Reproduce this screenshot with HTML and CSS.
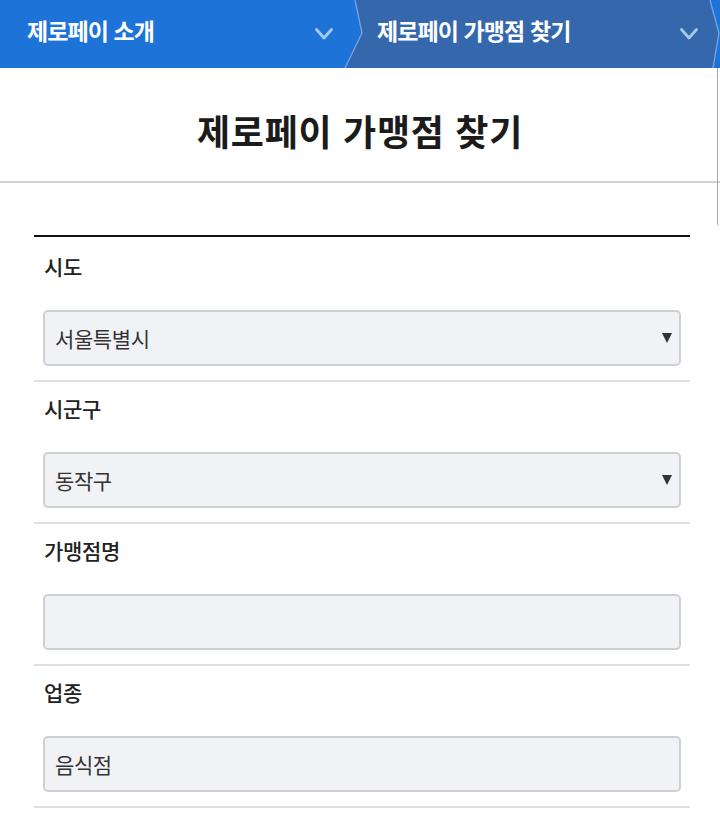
FILE: index.html
```html
<!DOCTYPE html>
<html lang="ko">
<head>
<meta charset="utf-8">
<title>제로페이 가맹점 찾기</title>
<link rel="stylesheet" href="styles.css">
</head>
<body>
<header class="topnav">
  <div class="tab tab-main">
    <span class="tab-label">제로페이 소개</span>
    <svg class="chev" viewBox="0 0 18 12" width="18" height="12"><polyline points="1.5,1.5 9,10 16.5,1.5" fill="none" stroke="currentColor" stroke-width="2.8" stroke-linecap="round" stroke-linejoin="round"/></svg>
  </div>
  <div class="tab tab-sub">
    <span class="tab-label">제로페이 가맹점 찾기</span>
    <svg class="chev" viewBox="0 0 18 12" width="18" height="12"><polyline points="1.5,1.5 9,10 16.5,1.5" fill="none" stroke="currentColor" stroke-width="2.8" stroke-linecap="round" stroke-linejoin="round"/></svg>
  </div>
  <svg class="tab-edges" viewBox="0 0 720 68" width="720" height="68">
    <polygon points="340,0 355,0 362,33 345,68 340,68" fill="#1e73d8"/>
    <polyline points="355,0 362,33 345,68" fill="none" stroke="#74a6e6" stroke-width="1.3"/>
    <polygon points="710,0 720,0 720,68 713,68 719,33" fill="#1e73d8"/>
    <polyline points="710,0 719,33 713,68" fill="none" stroke="#74a6e6" stroke-width="1.3"/>
  </svg>
</header>
<div class="scroll-edge"></div>

<section class="page-title">
  <h1>제로페이 가맹점 찾기</h1>
</section>

<form class="search-form">
  <div class="field field-first">
    <label class="field-label" for="sido">시도</label>
    <div class="select-wrap">
      <select id="sido" class="control"><option>서울특별시</option></select>
    </div>
  </div>
  <div class="field">
    <label class="field-label" for="sigungu">시군구</label>
    <div class="select-wrap">
      <select id="sigungu" class="control"><option>동작구</option></select>
    </div>
  </div>
  <div class="field">
    <label class="field-label" for="name">가맹점명</label>
    <input id="name" class="control" type="text" value="">
  </div>
  <div class="field">
    <label class="field-label" for="type">업종</label>
    <input id="type" class="control" type="text" value="음식점">
  </div>
</form>
</body>
</html>
```

FILE: styles.css
```css
* { box-sizing: border-box; }

html, body {
  margin: 0;
  padding: 0;
  background: #ffffff;
  overflow: hidden;
}

body {
  font-family: "Noto Sans CJK KR", "Noto Sans", sans-serif;
  color: #222;
  position: relative;
}

.topnav {
  position: relative;
  display: flex;
  height: 68px;
  background: #3567ad;
}

.tab {
  display: flex;
  align-items: center;
  height: 68px;
  color: #ffffff;
}

.tab-main {
  flex: 0 0 345px;
  background: #1e73d8;
  padding-left: 27px;
}

.tab-sub {
  flex: 1 1 auto;
  padding-left: 32px;
}

.tab-label {
  font-size: 23px;
  font-weight: 700;
  letter-spacing: -0.9px;
  line-height: 30px;
  margin-top: -8px;
}

.tab-main .chev {
  margin-left: auto;
  margin-right: 12px;
}

.tab-sub .chev {
  margin-left: auto;
  margin-right: 22px;
}

.chev {
  color: rgba(200, 222, 248, 0.8);
  margin-top: 0;
}

.tab-edges {
  position: absolute;
  left: 0;
  top: 0;
  pointer-events: none;
}

.scroll-edge {
  position: absolute;
  top: 68px;
  right: 0;
  width: 3px;
  height: 158px;
  border-left: 1px solid #a9a9a9;
  border-bottom-left-radius: 3px;
}

.page-title {
  height: 115px;
  border-bottom: 2px solid #d2d2d2;
  padding-top: 37px;
  text-align: center;
}

.page-title h1 {
  margin: 0;
  font-size: 36px;
  line-height: 50px;
  font-weight: 700;
  letter-spacing: 0.7px;
  color: #1b1b1b;
}

.search-form {
  margin: 52px 0 0 34px;
  width: 656px;
  border-top: 2px solid #111;
}

.field {
  display: flex;
  flex-direction: column;
  padding: 11px 9px 14px;
  border-bottom: 2px solid #dedfe1;
}

.field-first {
  padding-top: 14px;
}

.field-label {
  font-size: 21px;
  line-height: 30px;
  font-weight: 500;
  color: #222;
  padding-left: 1px;
  letter-spacing: -0.3px;
  margin-bottom: 29px;
}

.select-wrap {
  position: relative;
}

.select-wrap::after {
  content: "";
  position: absolute;
  right: 9px;
  top: 23px;
  border-left: 5px solid transparent;
  border-right: 5px solid transparent;
  border-top: 10px solid #333;
  pointer-events: none;
}

.control {
  display: block;
  width: 100%;
  height: 56px;
  margin: 0;
  padding: 0 10px;
  border: 2px solid #cfd0d4;
  border-radius: 5px;
  background: #f1f2f6;
  font-family: "Noto Sans CJK KR", "Noto Sans", sans-serif;
  font-size: 21px;
  letter-spacing: -0.4px;
  color: #333;
  -webkit-appearance: none;
  appearance: none;
  outline: none;
}
```
